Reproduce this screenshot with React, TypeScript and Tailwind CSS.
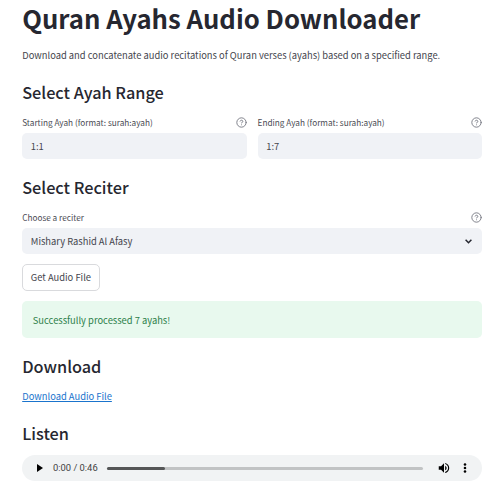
import React from 'react';

function HelpIcon() {
  return (
    <svg className="h-[11px] w-[11px] shrink-0" viewBox="0 0 24 24" fill="none" stroke="#7c7e87" strokeWidth="2.1" strokeLinecap="round" strokeLinejoin="round">
      <circle cx="12" cy="12" r="10.2" />
      <path d="M9.09 9a3 3 0 0 1 5.83 1c0 2-3 3-3 3" />
      <path d="M12 17h.01" />
    </svg>
  );
}

function Heading({ children }: { children: React.ReactNode }) {
  return <h2 className="h-[24px] whitespace-nowrap text-[16.3px] font-medium leading-[22px] text-[#262730]">{children}</h2>;
}

function Label({ text }: { text: string }) {
  return (
    <div className="flex h-[14px] items-center justify-between">
      <span className="whitespace-nowrap text-[8.22px] leading-[14px] text-[#4a4b53]">{text}</span>
      <HelpIcon />
    </div>
  );
}

function TextField({ label, value }: { label: string; value: string }) {
  return (
    <div className="w-[224.8px]">
      <Label text={label} />
      <div className="mt-[4px] flex h-[26px] items-center rounded-[5px] bg-[#f0f2f6] px-[8.6px] text-[9.4px] leading-[14px] text-[#44454d]">
        {value}
      </div>
    </div>
  );
}

export default function App() {
  return (
    <main className="h-[492px] w-[500px] overflow-hidden bg-white pl-[22.2px] pr-[17.6px] font-['Noto_Sans_CJK_SC',sans-serif] text-[#44454d]">
      <h1 className="h-[38px] whitespace-nowrap text-[25.7px] font-bold leading-[36px] text-[#262730]">Quran Ayahs Audio Downloader</h1>
      <p className="mt-[9px] h-[16px] whitespace-nowrap text-[9.37px] leading-[16px]">
        Download and concatenate audio recitations of Quran verses (ayahs) based on a specified range.
      </p>
      <div className="mt-[18px]"><Heading>Select Ayah Range</Heading></div>
      <div className="mt-[10px] flex justify-between">
        <TextField label="Starting Ayah (format: surah:ayah)" value="1:1" />
        <TextField label="Ending Ayah (format: surah:ayah)" value="1:7" />
      </div>
      <div className="mt-[17px]"><Heading>Select Reciter</Heading></div>
      <div className="mt-[10px]"><Label text="Choose a reciter" /></div>
      <div className="mt-[4px] flex h-[26px] items-center justify-between rounded-[5px] bg-[#f0f2f6] pl-[8.6px] pr-[10px] text-[9.37px] leading-[14px]">
        <span>Mishary Rashid Al Afasy</span>
        <svg className="h-[5px] w-[7px]" viewBox="0 0 7 5" fill="none" stroke="#262730" strokeWidth="1.5">
          <path d="M.6 .8 3.500 3.700 6.400 .8" />
        </svg>
      </div>
      <button className="mt-[10px] flex h-[27px] w-[77.400px] items-center justify-center whitespace-nowrap rounded-[5px] border border-[#d9dadd] pb-[1px] text-[9.37px] leading-[14px]">
        Get Audio File
      </button>
      <div className="mt-[10px] flex h-[37px] items-center rounded-[5px] bg-[#e8f9ee] pl-[10.600px] text-[9.37px] leading-[14px] text-[#2c8049]">
        Successfully processed 7 ayahs!
      </div>
      <div className="mt-[17px]"><Heading>Download</Heading></div>
      <a className="mt-[9px] block h-[16px] whitespace-nowrap text-[9.37px] leading-[16px] text-[#1a74cd] underline">Download Audio File</a>
      <div className="mt-[18px]"><Heading>Listen</Heading></div>
      <div className="mt-[9px] flex h-[26px] items-center rounded-full bg-[#f1f3f4] pl-[14.800px] pr-[9px]">
        <svg className="h-[8px] w-[6px] shrink-0" viewBox="0 0 6 8"><path d="M0 0v8l6-4z" fill="#000" /></svg>
        <span className="ml-[10px] w-[54px] shrink-0 whitespace-nowrap font-[Roboto,sans-serif] text-[9.4px] leading-[14px] text-[#3f4041]">0:00 / 0:46</span>
        <div className="h-[3px] w-[316px] shrink-0 rounded-full bg-[#c1c3c4]"><div className="h-full w-[58px] rounded-full bg-[#555657]" /></div>
        <svg className="ml-[14px] h-[14px] w-[14px] shrink-0" viewBox="0 0 24 24" fill="#000">
          <path d="M3 9v6h4l5 5V4L7 9H3zm13.500 3c0-1.770-1.020-3.290-2.500-4.030v8.050c1.480-.73 2.500-2.250 2.500-4.020zM14 3.230v2.060c2.890.86 5 3.540 5 6.710s-2.110 5.850-5 6.710v2.060c4.010-.91 7-4.490 7-8.770s-2.990-7.860-7-8.770z" />
        </svg>
        <svg className="ml-[7px] h-[14px] w-[14px] shrink-0" viewBox="0 0 24 24" fill="#000">
          <circle cx="12" cy="6" r="2.200" /><circle cx="12" cy="12" r="2.200" /><circle cx="12" cy="18" r="2.200" />
        </svg>
      </div>
    </main>
  );
}
